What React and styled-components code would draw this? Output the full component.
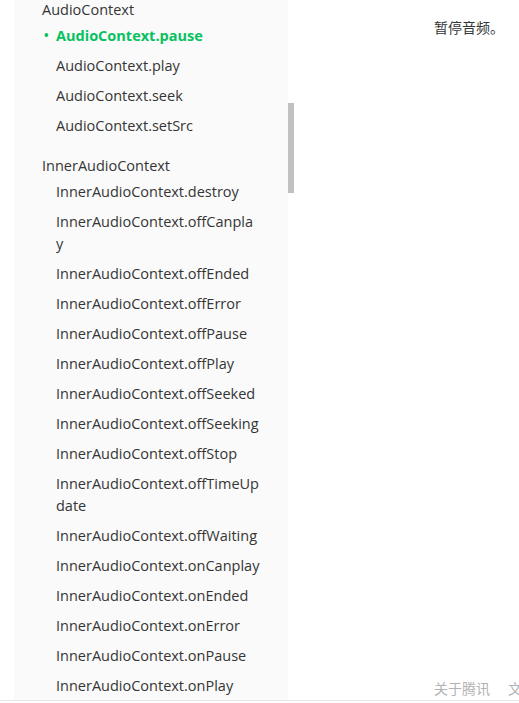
import styled, { createGlobalStyle } from "styled-components";

const GlobalStyle = createGlobalStyle`
  html, body {
    margin: 0;
    padding: 0;
    background: #fff;
  }
  body {
    font-family: "Open Sans", "Noto Sans CJK SC", sans-serif;
    color: #353535;
  }
`;

const groups = [
  {
    title: "AudioContext",
    items: [
      { name: "AudioContext.pause", active: true },
      { name: "AudioContext.play" },
      { name: "AudioContext.seek" },
      { name: "AudioContext.setSrc" },
    ],
  },
  {
    title: "InnerAudioContext",
    items: [
      { name: "InnerAudioContext.destroy" },
      { name: "InnerAudioContext.offCanplay" },
      { name: "InnerAudioContext.offEnded" },
      { name: "InnerAudioContext.offError" },
      { name: "InnerAudioContext.offPause" },
      { name: "InnerAudioContext.offPlay" },
      { name: "InnerAudioContext.offSeeked" },
      { name: "InnerAudioContext.offSeeking" },
      { name: "InnerAudioContext.offStop" },
      { name: "InnerAudioContext.offTimeUpdate" },
      { name: "InnerAudioContext.offWaiting" },
      { name: "InnerAudioContext.onCanplay" },
      { name: "InnerAudioContext.onEnded" },
      { name: "InnerAudioContext.onError" },
      { name: "InnerAudioContext.onPause" },
      { name: "InnerAudioContext.onPlay" },
    ],
  },
];

const App = () => {
  return (
    <>
      <GlobalStyle />
      <Page>
        <Body>
          <Aside>
            <Nav>
              {groups.map((g) => (
                <Group key={g.title}>
                  <GroupTitle>{g.title}</GroupTitle>
                  {g.items.map((it) => (
                    <Item key={it.name} $active={it.active}>
                      {it.name}
                    </Item>
                  ))}
                </Group>
              ))}
            </Nav>
            <Track>
              <Thumb />
            </Track>
          </Aside>
          <Main>
            <Desc>暂停音频。</Desc>
            <FooterLinks>
              <FooterLink>关于腾讯</FooterLink>
              <FooterLink>文档</FooterLink>
            </FooterLinks>
          </Main>
        </Body>
        <Bottom />
      </Page>
    </>
  );
};

const Page = styled.div`
  height: 703px;
  overflow: hidden;
  display: flex;
  flex-direction: column;
`;

const Body = styled.div`
  height: 700px;
  display: flex;
  flex-direction: row;
  overflow: hidden;
  flex-shrink: 0;
`;

const Bottom = styled.div`
  border-top: 1px solid #e7e7e7;
  flex: 1;
`;

const Aside = styled.div`
  margin-left: 14px;
  display: flex;
  flex-direction: row;
  flex-shrink: 0;
`;

const Nav = styled.nav`
  width: 274px;
  background: #fafafa;
  box-sizing: border-box;
  padding: 0 28.5px 0 28px;
  margin-top: -1px;
`;

const Track = styled.div`
  width: 6px;
`;

const Thumb = styled.div`
  margin-top: 103px;
  height: 90px;
  background: #c1c1c1;
`;

const Group = styled.div`
  margin-bottom: 14px;
`;

const GroupTitle = styled.div`
  font-size: 14.5px;
  line-height: 22px;
  color: #353535;
`;

const Item = styled.div`
  position: relative;
  padding: 4px 0 4px 14px;
  font-size: 14.5px;
  line-height: 22px;
  word-break: break-all;
  color: ${(p) => (p.$active ? "#07c160" : "#353535")};
  font-weight: ${(p) => (p.$active ? "bold" : "normal")};

  &::before {
    content: ${(p) => (p.$active ? '"•"' : "none")};
    position: absolute;
    left: 2px;
    top: 4px;
    font-size: 12px;
  }
`;

const Main = styled.main`
  flex: 1;
  display: flex;
  flex-direction: column;
  padding-left: 140px;
  min-width: 0;
`;

const Desc = styled.p`
  margin: 18px 0 0 0;
  font-size: 14px;
  line-height: 20px;
  color: #353535;
  white-space: nowrap;
`;

const FooterLinks = styled.div`
  margin-top: auto;
  display: flex;
  gap: 18px;
  white-space: nowrap;
  padding-bottom: 1px;
`;

const FooterLink = styled.span`
  font-size: 14px;
  line-height: 20px;
  color: #b2b2b2;
`;

export default App;
